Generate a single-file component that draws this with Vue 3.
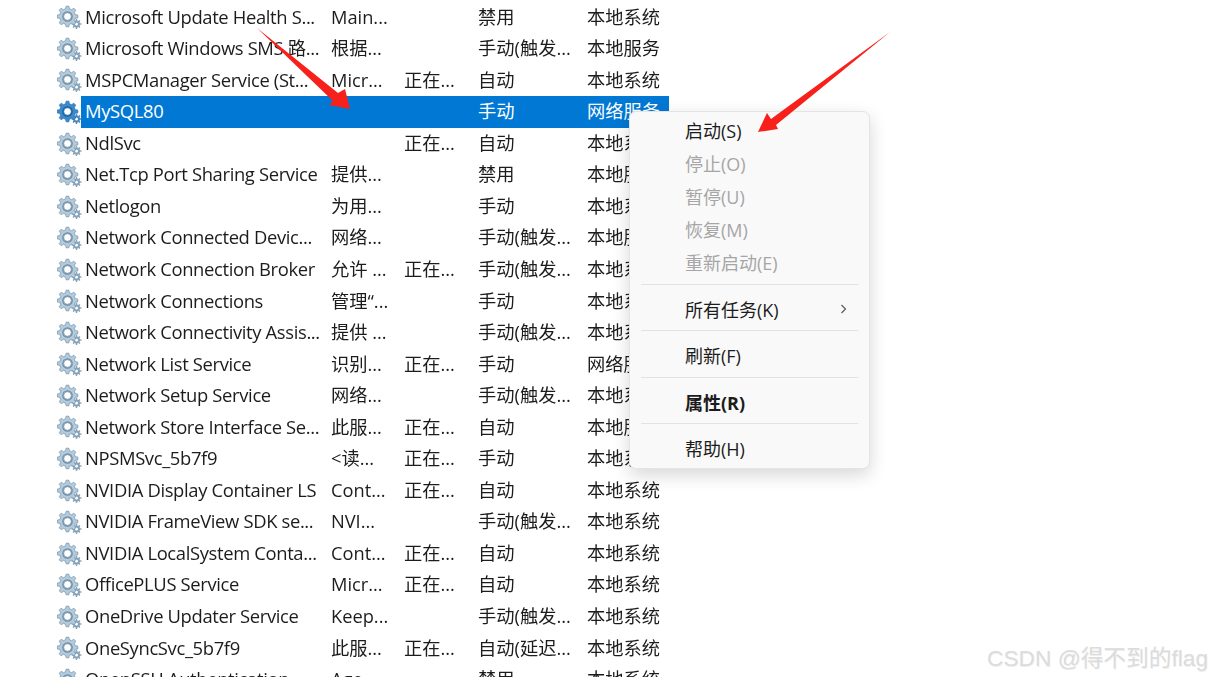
<script setup>
const rows = [
  ['Microsoft Update Health S...', 'Main...', '', '禁用', '本地系统'],
  ['Microsoft Windows SMS 路...', '根据...', '', '手动(触发...', '本地服务'],
  ['MSPCManager Service (St...', 'Micr...', '正在...', '自动', '本地系统'],
  ['MySQL80', '', '', '手动', '网络服务'],
  ['NdlSvc', '', '正在...', '自动', '本地系统'],
  ['Net.Tcp Port Sharing Service', '提供...', '', '禁用', '本地服务'],
  ['Netlogon', '为用...', '', '手动', '本地系统'],
  ['Network Connected Devic...', '网络...', '', '手动(触发...', '本地服务'],
  ['Network Connection Broker', '允许 ...', '正在...', '手动(触发...', '本地系统'],
  ['Network Connections', '管理“...', '', '手动', '本地系统'],
  ['Network Connectivity Assis...', '提供 ...', '', '手动(触发...', '本地系统'],
  ['Network List Service', '识别...', '正在...', '手动', '网络服务'],
  ['Network Setup Service', '网络...', '', '手动(触发...', '本地系统'],
  ['Network Store Interface Se...', '此服...', '正在...', '自动', '本地服务'],
  ['NPSMSvc_5b7f9', '<读...', '正在...', '手动', '本地系统'],
  ['NVIDIA Display Container LS', 'Cont...', '正在...', '自动', '本地系统'],
  ['NVIDIA FrameView SDK se...', 'NVI...', '', '手动(触发...', '本地系统'],
  ['NVIDIA LocalSystem Conta...', 'Cont...', '正在...', '自动', '本地系统'],
  ['OfficePLUS Service', 'Micr...', '正在...', '自动', '本地系统'],
  ['OneDrive Updater Service', 'Keep...', '', '手动(触发...', '本地系统'],
  ['OneSyncSvc_5b7f9', '此服...', '正在...', '自动(延迟...', '本地系统'],
  ['OpenSSH Authentication', 'Age...', '', '禁用', '本地系统'],
]
const gear = (cx, cy, ro, ri, n, hole) => {
  let d = ''
  const step = (Math.PI * 2) / n
  for (let i = 0; i < n; i++) {
    const a = i * step
    const pts = [[a - step * 0.3, ri], [a - step * 0.17, ro], [a + step * 0.17, ro], [a + step * 0.3, ri]]
    for (const [t, r] of pts) {
      d += (d ? 'L' : 'M') + (cx + r * Math.cos(t)).toFixed(2) + ' ' + (cy + r * Math.sin(t)).toFixed(2)
    }
  }
  d += 'Z'
  d += `M${cx - hole} ${cy}a${hole} ${hole} 0 1 0 ${hole * 2} 0a${hole} ${hole} 0 1 0 ${-hole * 2} 0Z`
  return d
}
const bigGear = gear(10.5, 10.5, 10.4, 8, 8, 3.8)
const smallGear = gear(19.5, 18, 5, 3.6, 8, 1.5)
</script>

<template>
  <div class="page">
    <div class="list">
      <div v-for="(r, i) in rows" :key="i" class="row" :class="{ sel: i === 3 }">
        <svg class="ico" viewBox="0 -2 26 26" width="26" height="26" aria-hidden="true">
          <path :d="smallGear" fill-rule="evenodd" :fill="i === 3 ? '#4a86b8' : '#86a3ba'" />
          <path :d="bigGear" fill-rule="evenodd" :fill="i === 3 ? '#3a8ad0' : '#b4cbdc'" :stroke="i === 3 ? '#2a6ba8' : '#6d8ea8'" stroke-width="0.7" />
          <circle cx="10.5" cy="10.5" r="4.7" fill="none" :stroke="i === 3 ? '#1c5f99' : '#6d8ba3'" stroke-width="1.2" />
        </svg>
        <div class="cells">
          <span class="name">{{ r[0] }}</span>
          <span>{{ r[1] }}</span>
          <span>{{ r[2] }}</span>
          <span>{{ r[3] }}</span>
          <span>{{ r[4] }}</span>
        </div>
      </div>
    </div>

    <div class="menu">
      <div class="group">
        <div class="item tall">启动(S)</div>
        <div class="item tall off">停止(O)</div>
        <div class="item tall off">暂停(U)</div>
        <div class="item tall off">恢复(M)</div>
        <div class="item tall off">重新启动(E)</div>
      </div>
      <div class="sep"></div>
      <div class="item">所有任务(K)
        <svg class="chev" width="7" height="10" viewBox="0 0 7 10" aria-hidden="true"><path d="M1.5 1l4 4-4 4" fill="none" stroke="#555" stroke-width="1.1" /></svg>
      </div>
      <div class="sep"></div>
      <div class="item">刷新(F)</div>
      <div class="sep"></div>
      <div class="item bold">属性(R)</div>
      <div class="sep"></div>
      <div class="item">帮助(H)</div>
    </div>

    <svg class="arrows" width="1211" height="677" viewBox="0 0 1211 677" aria-hidden="true">
      <path d="M257 28L338 93 345 89 350 109 329 105 333 101Z" fill="#f7201a" />
      <path d="M890 32L776 125 778 129 758 132 767 113 771 119Z" fill="#f7201a" />
    </svg>

    <div class="mark">CSDN @得不到的flag</div>
  </div>
</template>

<style>
html, body { margin: 0; background: #fff; }
</style>

<style scoped>
.page {
  position: relative;
  width: 1211px;
  height: 677px;
  overflow: hidden;
  background: #fff;
  font-family: "Open Sans", "Noto Sans CJK SC", sans-serif;
  color: #1c1c1c;
}
.list {
  padding: 1.6px 0 0 57px;
}
.row {
  display: flex;
  align-items: center;
  height: 31.55px;
}
.ico {
  width: 26px;
  height: 26px;
  margin-right: -2px;
  flex: none;
  filter: blur(0.35px);
}
.cells {
  width: 588px;
  height: 100%;
  display: grid;
  grid-template-columns: 246px 73px 74px 109px 82px;
  align-items: center;
  font-size: 18.25px;
  line-height: 28px;
  white-space: nowrap;
  box-sizing: border-box;
  padding-left: 4px;
  padding-bottom: 1.5px;
  filter: blur(0.25px);
}
.name {
  font-size: 18.4px;
  letter-spacing: -0.35px;
}
.sel .cells {
  background: #0078d4;
  color: #fff;
  filter: none;
}
.menu {
  position: absolute;
  left: 629px;
  top: 111px;
  width: 241px;
  height: 358px;
  box-sizing: border-box;
  background: #f9f9f9;
  border: 1px solid #e4e4e4;
  border-radius: 7px;
  box-shadow: 0 6px 18px rgba(0, 0, 0, 0.16);
  padding: 3px 11px 0;
  font-size: 18px;
}
.item {
  position: relative;
  box-sizing: border-box;
  height: 45.33px;
  padding-top: 3px;
  line-height: 45.33px;
  padding-left: 44px;
  white-space: nowrap;
}
.item.tall {
  height: 33px;
  padding-top: 0;
  line-height: 33px;
}
.group {
  padding-bottom: 4px;
}
.off {
  color: #a6a6a6;
}
.bold {
  font-weight: 700;
}
.chev {
  position: absolute;
  right: 11px;
  top: 19px;
}
.sep {
  height: 1px;
  background: #e2e2e2;
}
.arrows {
  position: absolute;
  left: 0;
  top: 0;
  pointer-events: none;
}
.mark {
  position: absolute;
  right: 3px;
  top: 643px;
  font-family: "Liberation Sans", "Noto Sans CJK SC", sans-serif;
  font-size: 22.7px;
  line-height: 30px;
  color: #dcdcdc;
  text-shadow: 0.5px 0.5px 0 #efefef;
  white-space: nowrap;
}
</style>
